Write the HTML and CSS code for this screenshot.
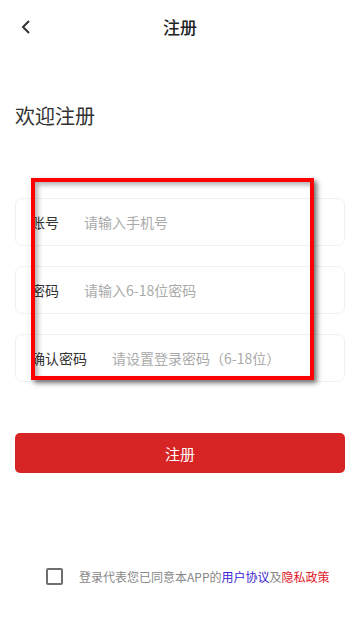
FILE: index.html
```html
<!DOCTYPE html>
<html lang="zh">
<head>
<meta charset="utf-8">
<link rel="stylesheet" href="styles.css">
</head>
<body>
<div class="page">
  <header class="nav">
    <span class="back"><svg width="12" height="16" viewBox="0 0 12 16"><path d="M9 2 L3 8 L9 14" fill="none" stroke="#333" stroke-width="2"/></svg></span>
    <span class="nav-title">注册</span>
  </header>
  <h1 class="welcome">欢迎注册</h1>
  <div class="form">
    <div class="field"><span class="label">账号</span><span class="ph">请输入手机号</span></div>
    <div class="field"><span class="label">密码</span><span class="ph">请输入6-18位密码</span></div>
    <div class="field"><span class="label">确认密码</span><span class="ph">请设置登录密码（6-18位）</span></div>
    <div class="mark"></div>
  </div>
  <button class="submit">注册</button>
  <div class="spacer"></div>
  <div class="agree">
    <span class="check"></span>
    <span class="agree-text">登录代表您已同意本APP的<span class="blue">用户协议</span>及<span class="red">隐私政策</span></span>
  </div>
</div>
</body>
</html>
```
FILE: styles.css
```css
html, body { margin: 0; padding: 0; background: #fff; }
body { font-family: "Noto Sans CJK SC", "Noto Sans", sans-serif; color: #333; }
.page { width: 360px; height: 620px; display: flex; flex-direction: column; box-sizing: border-box; }
.nav { height: 54px; position: relative; display: flex; align-items: center; justify-content: center; }
.back { position: absolute; left: 20px; top: 19px; line-height: 0; }
.nav-title { font-size: 17px; font-weight: 500; color: #222; margin-top: -2px; }
.welcome { margin: 47px 0 0 15px; font-size: 20px; font-weight: normal; line-height: 30px; color: #333; }
.form { position: relative; margin: 67px 15px 0; display: flex; flex-direction: column; gap: 20px; }
.field { height: 48px; box-sizing: border-box; border: 1px solid #f1f1f1; border-radius: 7px; display: flex; align-items: center; padding-left: 15px; font-size: 14px; }
.label { color: #333; margin-right: 25px; }
.ph { color: #aaa; }
.mark { position: absolute; left: 16px; top: -20px; width: 283px; height: 202px; box-sizing: border-box; border: 4px solid #ff0000; box-shadow: 3px 3px 5px rgba(0,0,0,0.55), inset 3px 3px 5px rgba(0,0,0,0.3); pointer-events: none; }
.submit { margin: 51px 15px 0; height: 40px; border: none; border-radius: 5px; background: #d72526; color: #fff; font-family: inherit; font-size: 15px; }
.spacer { flex: 1; }
.agree { display: flex; align-items: center; padding-left: 46px; margin-bottom: 35px; }
.check { width: 17px; height: 17px; box-sizing: border-box; border: 2px solid #6f6f6f; border-radius: 2px; margin-right: 16px; }
.agree-text { font-size: 12px; color: #888; }
.blue { color: #3a22d4; }
.red { color: #e0202a; }
```
